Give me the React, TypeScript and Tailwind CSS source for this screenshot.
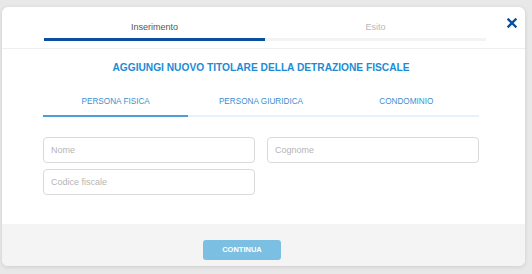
export default function App() {
  return (
    <div className="h-[274px] w-[532px] bg-[#e8e8e8] pl-[2px] pt-[7px] font-['Liberation_Sans',Arial,sans-serif]">
      <div className="w-[523px] overflow-hidden rounded-[6px] bg-white shadow-[0_1px_4px_rgba(0,0,0,0.12)]">
        {/* step header */}
        <div className="relative h-[42px] border-b border-[#eeeeee]">
          <div className="ml-[42px] flex w-[442px]">
            <div className="flex-1">
              <div className="pt-[14px] text-center text-[9px] leading-[12px] text-[#555555]">Inserimento</div>
              <div className="mt-[5px] h-[3px] bg-[#0b4f9f]" />
            </div>
            <div className="flex-1">
              <div className="pt-[14px] text-center text-[9px] leading-[12px] text-[#b8b8b8]">Esito</div>
              <div className="mt-[5px] h-[3px] bg-[#f3f3f3]" />
            </div>
          </div>
          <button className="absolute right-[8px] top-[11px] flex h-[10px] w-[10px] items-center justify-center">
            <svg viewBox="0 0 10 10" className="h-[10px] w-[10px]">
              <path d="M1.5 1.5 L8.5 8.5 M8.5 1.5 L1.5 8.5" stroke="#0b4f9f" strokeWidth="2.4" strokeLinecap="square" />
            </svg>
          </button>
        </div>

        {/* body */}
        <div className="pb-[29px] pl-[41px] pr-[46px]">
          <div className="pt-[12px] text-center text-[10.2px] font-bold leading-[14px] text-[#1d8bd3]">
            AGGIUNGI NUOVO TITOLARE DELLA DETRAZIONE FISCALE
          </div>

          <div className="mt-[21px] grid grid-cols-3 border-b-2 border-[#e6f1f9]">
            <div className="-mb-[2px] border-b-2 border-[#4a9fd8] pb-[7px] text-center text-[8.2px] leading-[12px] text-[#3b8fd0]">
              PERSONA FISICA
            </div>
            <div className="pb-[7px] text-center text-[8.2px] leading-[12px] text-[#3b8fd0]">PERSONA GIURIDICA</div>
            <div className="pb-[7px] text-center text-[8.2px] leading-[12px] text-[#3b8fd0]">CONDOMINIO</div>
          </div>

          <div className="mt-[20px] grid grid-cols-2 gap-x-[12px] gap-y-[6px]">
            <input
              placeholder="Nome"
              className="h-[26px] rounded-[4px] border border-[#d9d9d9] px-[7px] text-[9px] text-[#333] outline-none placeholder:text-[#b5b5b5]"
            />
            <input
              placeholder="Cognome"
              className="h-[26px] rounded-[4px] border border-[#d9d9d9] px-[7px] text-[9px] text-[#333] outline-none placeholder:text-[#b5b5b5]"
            />
            <input
              placeholder="Codice fiscale"
              className="h-[26px] rounded-[4px] border border-[#d9d9d9] px-[7px] text-[9px] text-[#333] outline-none placeholder:text-[#b5b5b5]"
            />
          </div>
        </div>

        {/* footer */}
        <div className="h-[42px] bg-[#f4f4f4] pl-[201px] pt-[11px]">
          <button className="h-[20px] w-[78px] rounded-[3px] bg-[#7bbfe3] text-[7.5px] font-bold text-white">
            CONTINUA
          </button>
        </div>
      </div>
    </div>
  );
}
